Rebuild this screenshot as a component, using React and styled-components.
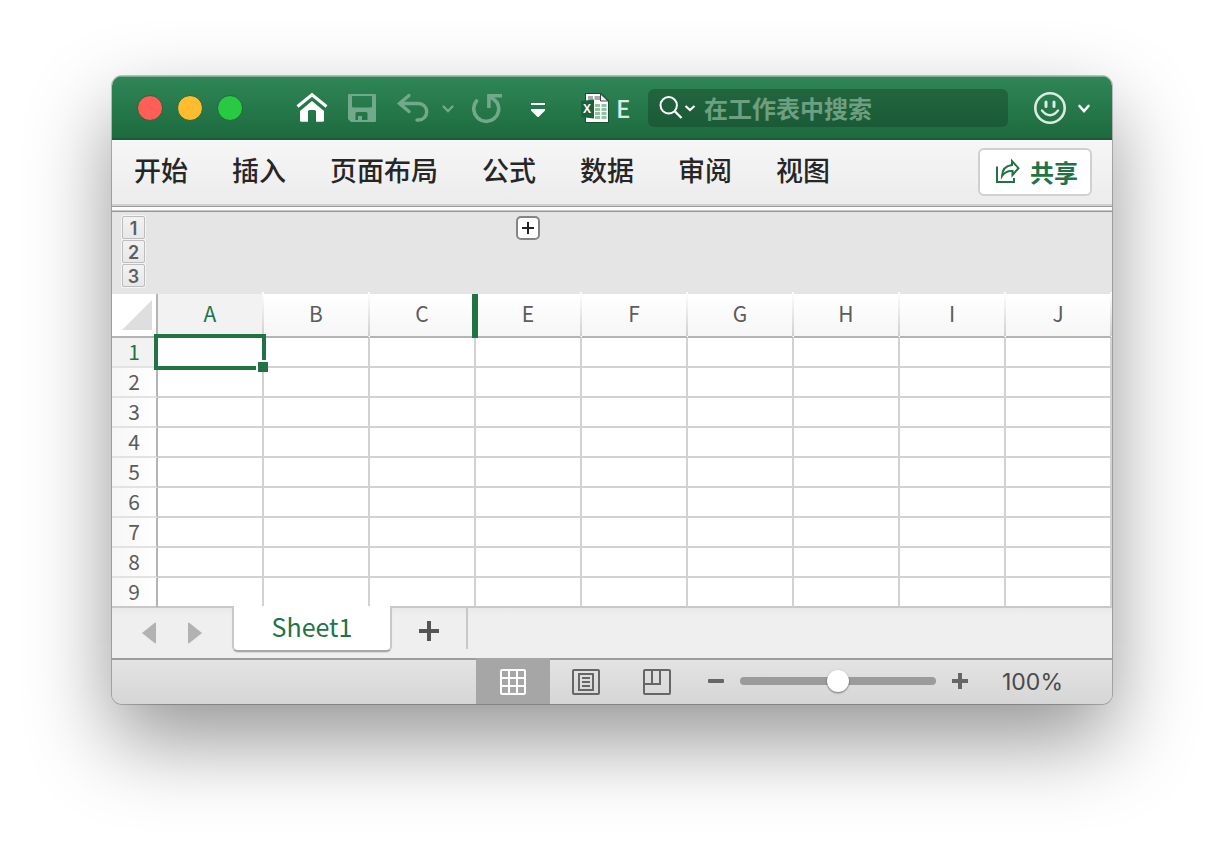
import React, { useState } from "react";
import styled, { createGlobalStyle, css } from "styled-components";

const columns = ["A", "B", "C", "E", "F", "G", "H", "I", "J"];
const rows = [1, 2, 3, 4, 5, 6, 7, 8, 9];
const tabs = ["开始", "插入", "页面布局", "公式", "数据", "审阅", "视图"];
const lights = [
  { name: "关闭", color: "#ff5f57" },
  { name: "最小化", color: "#ffbd2e" },
  { name: "缩放", color: "#28ca42" },
];

const HomeIcon = () => (
  <svg width="36" height="36" viewBox="0 0 36 36" fill="none">
    <path d="M3.500 16.500 18 4.800l14.500 11.700" stroke="#fff" strokeWidth="3" />
    <path
      d="M18 11 30 21v9.500q0 1.200-1.200 1.200H22V21.500Q22 20 20.500 20h-5Q14 20 14 21.500v10.200H7.200Q6 31.700 6 30.500V21Z"
      fill="#fff"
    />
  </svg>
);

const SaveIcon = () => (
  <svg width="32" height="32" viewBox="0 0 32 32">
    <path
      fillRule="evenodd"
      fill="#72a98a"
      d="M3 2h26q1 0 1 1v26q0 1-1 1H5l-3-3V3q0-1 1-1ZM6 4v10q0 1.500 1.500 1.500h17Q26 15.500 26 14V4ZM11 20q-1.500 0-1.500 1.500V28H12v-4h4v4h5.500v-6.500Q21.500 20 20 20Z"
    />
  </svg>
);

const UndoIcon = () => (
  <svg width="62" height="36" viewBox="0 0 62 36" fill="none" stroke="#72a98a" strokeLinecap="round">
    <path d="M15 5.500 5.500 13.500 15 21.500M6 13.500h18.500a8 8 0 0 1 0 16.500H23" strokeWidth="3.400" />
    <path d="M49.500 16.500 54 21l4.500-4.500" strokeWidth="2.400" />
  </svg>
);

const RedoIcon = () => (
  <svg width="32" height="32" viewBox="0 0 32 32" fill="none" stroke="#72a98a" strokeWidth="3.600">
    <path d="M4.500 9A12.500 12.500 0 1 0 25 10.500Q22.500 7.500 18 4.500" strokeLinecap="round" />
    <path d="M30 3.700H16.900V16" />
  </svg>
);

const MoreIcon = () => (
  <svg width="36" height="36" viewBox="0 0 36 36" fill="#fff">
    <path d="M11 13h14v2H11ZM11 19h14v1.500L19 26.500q-1 1-2 0L11 20.500Z" />
  </svg>
);

const WorkbookIcon = () => (
  <svg width="30" height="32" viewBox="0 0 30 32">
    <path d="M5 1h16l8 7.500V31H5Z" fill="#174f31" />
    <path d="M6 2h14.500l7.500 7V30H6Z" fill="#fff" />
    <path d="M8 4h5v4H8ZM14.500 4H20v4h-5.500Z" fill="#a9a9a9" />
    <path d="M20.500 2v7H28Z" fill="#f4f4f4" stroke="#444" />
    <path
      d="M15 12h5v3h-5zM21.500 12h5v3h-5zM15 16h5v3h-5zM21.500 16h5v3h-5zM15 20h5v3h-5zM21.500 20h5v3h-5zM15 24h5v3h-5zM21.500 24h5v3h-5z"
      fill="#8fc49f"
    />
    <path d="M1 9 14 7.500v19L1 25Z" fill="#1b6139" />
    <text x="7" y="21" textAnchor="middle" fontFamily="Liberation Sans, sans-serif" fontWeight="700" fontSize="12" fill="#fff">
      X
    </text>
  </svg>
);

const SearchIcon = () => (
  <svg width="40" height="32" viewBox="0 0 40 32" fill="none" stroke="#fff">
    <circle cx="12.700" cy="13.300" r="8.200" strokeWidth="2" />
    <path d="m18.500 19 7 7" strokeWidth="2.400" />
    <path d="m29.500 14 4.500 4 4.500-4" strokeWidth="2.200" />
  </svg>
);

const SmileIcon = () => (
  <svg width="60" height="36" viewBox="0 0 60 36" fill="none" stroke="#dcebe2" strokeLinecap="round">
    <circle cx="18" cy="18" r="14.700" strokeWidth="2.600" />
    <path d="M14 12v4.500M22 12v4.500" strokeWidth="3" />
    <path d="M10 20.500q8 9.500 16 0" strokeWidth="2.400" />
    <path d="m47.500 16 4.500 5 4.500-5" stroke="#fff" strokeWidth="2.600" />
  </svg>
);

const ShareIcon = () => (
  <svg width="28" height="28" viewBox="0 0 28 28" fill="none" stroke="#217346" strokeWidth="2">
    <path d="M3 9.500V25h17v-4" />
    <path d="M8 19Q8.500 9 18 8V4l6.500 7.200L18.500 18v-4Q11.500 13.500 8 19Z" />
  </svg>
);

const GridIcon = () => (
  <svg width="28" height="28" viewBox="0 0 28 28" fill="none" stroke="#fff" strokeWidth="2">
    <rect x="2" y="2" width="24" height="24" rx="1" />
    <path d="M10 2v24M18 2v24M2 10h24M2 18h24" />
  </svg>
);

const PageIcon = () => (
  <svg width="28" height="28" viewBox="0 0 28 28" fill="none" stroke="#666" strokeWidth="2">
    <rect x="1" y="2" width="26" height="24" rx="1" />
    <rect x="7" y="6" width="14" height="16" />
    <path d="M10 10h8M10 14h8M10 18h8" />
  </svg>
);

const BreaksIcon = () => (
  <svg width="28" height="28" viewBox="0 0 28 28" fill="none" stroke="#666" strokeWidth="2">
    <rect x="1" y="2" width="26" height="24" rx="1" />
    <path d="M1 16h16V2M9 2v14" />
  </svg>
);

const PlusIcon = ({ size, weight, color }) => (
  <svg width={size} height={size} viewBox="0 0 20 20" stroke={color} strokeWidth={weight}>
    <path d="M10 0v20M0 10h20" />
  </svg>
);

const MinusIcon = () => (
  <svg width="16" height="16" viewBox="0 0 16 16">
    <rect y="6" width="16" height="4" rx="1" fill="#666" />
  </svg>
);

const ArrowIcon = ({ flip }) => (
  <svg width="14" height="22" viewBox="0 0 14 22" fill="#b2b2b2">
    <path d={flip ? "M0 1.500Q0 0 1.500 1L14 11 1.500 21Q0 22 0 20.500Z" : "M14 1.500Q14 0 12.500 1L0 11l12.500 10q1.500 1 1.500-.500Z"} />
  </svg>
);

const App = () => {
  const [zoom, setZoom] = useState(100);
  const [level, setLevel] = useState(0);

  return (
    <Desktop>
      <GlobalStyle />
      <Window>
        <TitleBar>
          <Lights>
            {lights.map((x) => (
              <Light key={x.name} aria-label={x.name} $color={x.color} />
            ))}
          </Lights>
          <Toolbar>
            <IconButton aria-label="主页"><HomeIcon /></IconButton>
            <IconButton aria-label="保存"><SaveIcon /></IconButton>
            <IconButton aria-label="撤消"><UndoIcon /></IconButton>
            <IconButton aria-label="重复"><RedoIcon /></IconButton>
            <IconButton aria-label="自定义工具栏"><MoreIcon /></IconButton>
          </Toolbar>
          <DocTitle>
            <WorkbookIcon />
            <span>E</span>
          </DocTitle>
          <SearchBox>
            <SearchIcon />
            <input type="text" aria-label="在工作表中搜索" placeholder="在工作表中搜索" />
          </SearchBox>
          <IconButton aria-label="反馈"><SmileIcon /></IconButton>
        </TitleBar>

        <Ribbon>
          <Tabs>
            {tabs.map((x) => (
              <Tab key={x}>{x}</Tab>
            ))}
          </Tabs>
          <ShareButton>
            <ShareIcon />
            共享
          </ShareButton>
        </Ribbon>

        <Outline>
          <Levels>
            {[1, 2, 3].map((x) => (
              <Level key={x} onClick={() => setLevel(x)} aria-pressed={level === x}>
                {x}
              </Level>
            ))}
          </Levels>
          <ExpandButton aria-label="展开">
            <PlusIcon size={12} weight={3.4} color="#222" />
          </ExpandButton>
        </Outline>

        <Sheet>
          <thead>
            <tr>
              <Corner>
                <svg width="30" height="30" viewBox="0 0 30 30">
                  <path d="M30 0v30H0Z" fill="#dedede" />
                </svg>
              </Corner>
              {columns.map((x) => (
                <ColumnHead key={x} scope="col" $active={x === "A"} $hiddenNext={x === "C"}>
                  {x}
                </ColumnHead>
              ))}
            </tr>
          </thead>
          <tbody>
            {rows.map((row) => (
              <tr key={row}>
                <RowHead scope="row" $active={row === 1}>{row}</RowHead>
                {columns.map((x) => (
                  <Cell key={x}>{row === 1 && x === "A" && <Selection />}</Cell>
                ))}
              </tr>
            ))}
          </tbody>
        </Sheet>

        <SheetBar>
          <SheetNav>
            <IconButton aria-label="上一个工作表"><ArrowIcon /></IconButton>
            <IconButton aria-label="下一个工作表"><ArrowIcon flip /></IconButton>
          </SheetNav>
          <SheetTab>Sheet1</SheetTab>
          <AddSheet aria-label="新建工作表">
            <PlusIcon size={20} weight={4} color="#555" />
          </AddSheet>
        </SheetBar>

        <StatusBar>
          <ViewButton aria-label="普通" $active><GridIcon /></ViewButton>
          <ViewButton aria-label="页面布局"><PageIcon /></ViewButton>
          <ViewButton aria-label="分页预览"><BreaksIcon /></ViewButton>
          <ZoomGroup>
            <IconButton aria-label="缩小" onClick={() => setZoom(zoom - 10)}><MinusIcon /></IconButton>
            <Slider
              type="range"
              aria-label="缩放比例"
              min="0"
              max="200"
              value={zoom}
              onChange={(e) => setZoom(Number(e.target.value))}
            />
            <IconButton aria-label="放大" onClick={() => setZoom(zoom + 10)}>
              <PlusIcon size={16} weight={5} color="#666" />
            </IconButton>
          </ZoomGroup>
          <ZoomText>{zoom}%</ZoomText>
        </StatusBar>
      </Window>
    </Desktop>
  );
};

const GlobalStyle = createGlobalStyle`
  *, *::before, *::after {
    box-sizing: border-box;
  }
  body {
    margin: 0;
    background: #fff;
    font-family: "Noto Sans CJK SC", "Noto Sans", sans-serif;
  }
  button, input {
    margin: 0;
    padding: 0;
    border: none;
    background: none;
    font: inherit;
    color: inherit;
  }
  svg {
    display: block;
    flex: none;
  }
`;

const Desktop = styled.div`
  padding: 76px 112px 148px;
`;

const Window = styled.main`
  border-radius: 10px;
  overflow: hidden;
  background: #efefef;
  box-shadow: 0 0 0 1px rgba(0, 0, 0, 0.22), 0 36px 84px rgba(0, 0, 0, 0.42);
`;

const TitleBar = styled.header`
  display: flex;
  align-items: center;
  height: 64px;
  padding: 2px 20px 0 25px;
  background: linear-gradient(#2f8656, #1d6b3f);
  border-bottom: 2px solid #1a5c37;
  box-shadow: inset 0 1px #7fae94;
`;

const Lights = styled.div`
  display: flex;
  gap: 14px;
`;

const Light = styled.button`
  width: 26px;
  height: 26px;
  border: 1px solid #22663f;
  border-radius: 50%;
  background: ${(p) => p.$color};
`;

const Toolbar = styled.nav`
  display: flex;
  align-items: center;
  gap: 16px;
  margin-left: 51px;
`;

const IconButton = styled.button`
  display: flex;
  align-items: center;
  justify-content: center;
`;

const DocTitle = styled.div`
  display: flex;
  align-items: center;
  gap: 6px;
  margin: 0 17px 0 24px;
  span {
    width: 15px;
    color: #dcebe2;
    font-size: 24px;
    font-weight: 500;
    line-height: 32px;
  }
`;

const SearchBox = styled.label`
  display: flex;
  align-items: center;
  flex: 1;
  height: 38px;
  min-width: 0;
  margin-right: 24px;
  padding: 0 16px 0 0;
  border-radius: 6px;
  background: linear-gradient(#21653f, #1b5a36);
  svg {
    margin: 0 8px;
  }
  input {
    flex: 1;
    min-width: 0;
    color: #fff;
    font-size: 24px;
    font-weight: 700;
    line-height: 36px;
    outline: none;
  }
  input::placeholder {
    color: #6d9f81;
    opacity: 1;
  }
`;

const Ribbon = styled.div`
  display: flex;
  align-items: center;
  justify-content: space-between;
  height: 72px;
  padding: 0 20px 8px 22px;
  background: linear-gradient(
    #f6f6f6 0,
    #ececec 64px,
    #cfcfcf 64px,
    #cfcfcf 66px,
    #9c9c9c 66px,
    #9c9c9c 67px,
    #fbfbfb 67px,
    #fbfbfb 70px,
    #c8c8c8 70px,
    #c8c8c8 71px,
    #969696 71px
  );
`;

const Tabs = styled.nav`
  display: flex;
  gap: 44px;
  padding-bottom: 4px;
`;

const Tab = styled.button`
  color: #262626;
  font-size: 27px;
  font-weight: 500;
  line-height: 40px;
`;

const ShareButton = styled.button`
  display: flex;
  align-items: center;
  gap: 8px;
  height: 48px;
  padding: 0 12px 2px 14px;
  border: 2px solid #d0d0d0;
  border-radius: 6px;
  background: #fff;
  color: #217346;
  font-size: 24px;
  font-weight: 700;
`;

const Outline = styled.div`
  display: grid;
  grid-template-columns: 46px repeat(9, 1fr);
  height: 82px;
  padding-top: 4px;
  background: #e5e5e5;
`;

const Levels = styled.div`
  display: flex;
  flex-direction: column;
  gap: 1px;
  padding-left: 10px;
`;

const Level = styled.button`
  width: 23px;
  height: 23px;
  border: 1px solid #bdbdbd;
  border-radius: 2px;
  background: linear-gradient(#f2f2f2, #e8e8e8);
  box-shadow: 0 0 0 1px #f4f4f4;
  color: #5e5e5e;
  font: 600 18px/24px Inter, Arial, sans-serif;
`;

const ExpandButton = styled.button`
  display: flex;
  align-items: center;
  justify-content: center;
  grid-column: 5;
  justify-self: center;
  width: 24px;
  height: 24px;
  margin-right: 2px;
  border: 2px solid #858585;
  border-radius: 5px;
  background: #fff;
`;

const Sheet = styled.table`
  width: 100%;
  table-layout: fixed;
  border-collapse: separate;
  border-spacing: 0;
  background: #fff;
  color: #5c5c5c;
  font-size: 21px;
  th {
    padding: 0;
    font-weight: 400;
    text-align: center;
  }
`;

const Corner = styled.td`
  width: 46px;
  height: 44px;
  padding: 0 0 0 10px;
  border-right: 2px solid #b4b4b4;
  border-bottom: 2px solid #b4b4b4;
`;

const ColumnHead = styled.th`
  position: relative;
  height: 44px;
  border-right: 2px solid transparent;
  border-bottom: 2px solid #b4b4b4;
  background: linear-gradient(#fff, #f6f6f6);
  line-height: 38px;
  vertical-align: top;
  &::after {
    content: "";
    position: absolute;
    top: -2px;
    right: -2px;
    bottom: 0;
    width: 2px;
    background: linear-gradient(#fff, #cfcfcf);
  }
  ${(p) =>
    p.$active &&
    css`
      color: #217346;
      background: #f2f2f2;
    `}
  ${(p) =>
    p.$hiddenNext &&
    css`
      z-index: 1;
      &::after {
        top: 0;
        right: -4px;
        bottom: -2px;
        width: 6px;
        background: #217346;
      }
    `}
`;

const RowHead = styled.th`
  height: 30px;
  border-right: 2px solid #b4b4b4;
  border-bottom: 2px solid #e2e2e2;
  background: linear-gradient(90deg, #f6f6f6, #fff);
  line-height: 26px;
  vertical-align: top;
  ${(p) =>
    p.$active &&
    css`
      color: #217346;
      background: #f2f2f2;
    `}
  tr:last-child > & {
    border-bottom-color: #c8c8c8;
  }
`;

const Cell = styled.td`
  position: relative;
  padding: 0;
  border-right: 2px solid #d2d2d2;
  border-bottom: 2px solid #d2d2d2;
  tr:last-child > & {
    border-bottom-color: #c8c8c8;
  }
`;

const Selection = styled.div`
  position: absolute;
  z-index: 2;
  inset: -4px;
  border: 4px solid #217346;
  &::after {
    content: "";
    position: absolute;
    right: -6px;
    bottom: -6px;
    width: 12px;
    height: 12px;
    border: solid #fff;
    border-width: 2px 0 0 2px;
    background: #217346;
  }
`;

const SheetBar = styled.div`
  display: flex;
  height: 50px;
  background: linear-gradient(#e8eae9, #efefef 8px);
`;

const SheetNav = styled.div`
  display: flex;
  gap: 32px;
  padding: 0 30px;
`;

const SheetTab = styled.button`
  position: relative;
  width: 160px;
  height: 46px;
  margin-top: -2px;
  padding-bottom: 4px;
  border: 2px solid #c8c8c8;
  border-top: none;
  border-bottom-color: #a8a8a8;
  border-radius: 0 0 6px 6px;
  background: #fff;
  box-shadow: 0 1px 1px rgba(0, 0, 0, 0.1);
  color: #217346;
  font-size: 25px;
  line-height: 40px;
`;

const AddSheet = styled.button`
  display: flex;
  align-items: center;
  justify-content: center;
  width: 76px;
  height: 41px;
  padding-top: 5px;
  border-right: 2px solid #c8c8c8;
`;

const StatusBar = styled.footer`
  display: flex;
  align-items: stretch;
  justify-content: flex-end;
  height: 46px;
  padding-right: 48px;
  background: linear-gradient(#9c9c9c 2px, #e3e3e3 2px, #d6d6d6);
`;

const ViewButton = styled.button`
  display: flex;
  align-items: center;
  justify-content: center;
  width: ${(p) => (p.$active ? "74px" : "71px")};
  padding-top: 1px;
  background: ${(p) => (p.$active ? "#a6a6a6" : "none")};
`;

const ZoomGroup = styled.div`
  display: flex;
  align-items: center;
  gap: 16px;
  margin-left: 16px;
`;

const Slider = styled.input`
  appearance: none;
  width: 196px;
  height: 8px;
  border-radius: 4px;
  background: #9b9b9b;
  &::-webkit-slider-thumb {
    appearance: none;
    width: 22px;
    height: 22px;
    border-radius: 50%;
    background: #fff;
    box-shadow: 0 1px 2px rgba(0, 0, 0, 0.5);
  }
`;

const ZoomText = styled.span`
  width: 62px;
  margin-left: 34px;
  color: #4a4a4a;
  font: 400 23px/48px Inter, sans-serif;
`;

export default App;
